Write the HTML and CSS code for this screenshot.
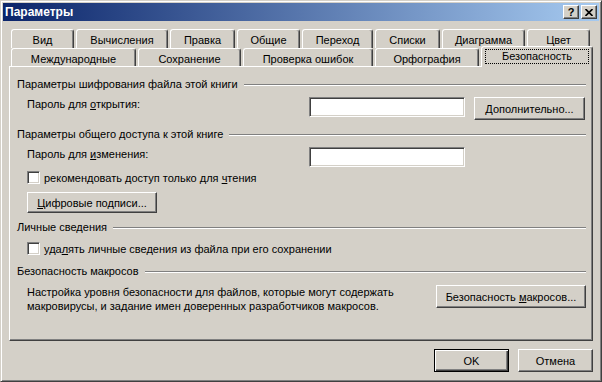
FILE: index.html
```html
<!DOCTYPE html>
<html lang="ru">
<head>
    <meta charset="UTF-8">
    <title>Параметры</title>
    <link rel="stylesheet" href="styles.css">
</head>
<body>
    <div class="window">
        <div class="titlebar">
            <span class="title">Параметры</span>
            <div class="caption-buttons">
                <button class="cap-btn help">?</button>
                <button class="cap-btn">
                    <svg width="8" height="7" viewBox="0 0 8 7">
                        <path d="M0.5 0 L7.5 7 M7.5 0 L0.5 7" stroke="#000" stroke-width="1.6" fill="none"/>
                    </svg>
                </button>
            </div>
        </div>

        <div class="dialog">
            <div class="tabs">
                <div class="tab-row back">
                    <div class="tab" style="width:63px">Вид</div>
                    <div class="tab" style="width:92px">Вычисления</div>
                    <div class="tab" style="width:65px">Правка</div>
                    <div class="tab" style="width:63px">Общие</div>
                    <div class="tab" style="width:71px">Переход</div>
                    <div class="tab" style="width:65px">Списки</div>
                    <div class="tab" style="width:83px">Диаграмма</div>
                    <div class="tab" style="width:63px">Цвет</div>
                </div>
                <div class="tab-row front">
                    <div class="tab" style="width:125px">Международные</div>
                    <div class="tab" style="width:103px">Сохранение</div>
                    <div class="tab" style="width:130px">Проверка ошибок</div>
                    <div class="tab" style="width:104px">Орфография</div>
                    <div class="tab active" style="width:112px"><span class="focus">Безопасность</span></div>
                </div>
            </div>

            <div class="panel">
                <div class="group">
                    <div class="group-title"><span>Параметры шифрования файла этой книги</span></div>
                    <div class="field-row">
                        <span class="field-label">Пароль для <u>о</u>ткрытия:</span>
                        <input class="edit" type="text">
                        <button class="btn more"><u>Д</u>ополнительно...</button>
                    </div>
                </div>

                <div class="group">
                    <div class="group-title"><span>Параметры общего доступа к этой книге</span></div>
                    <div class="field-row">
                        <span class="field-label">Пароль для <u>и</u>зменения:</span>
                        <input class="edit" type="text">
                    </div>
                    <div class="check">
                        <span class="checkbox"></span>
                        <span>рекомендовать доступ только для <u>ч</u>тения</span>
                    </div>
                    <button class="btn signatures"><u>Ц</u>ифровые подписи...</button>
                </div>

                <div class="group">
                    <div class="group-title"><span>Личные сведения</span></div>
                    <div class="check">
                        <span class="checkbox"></span>
                        <span>уда<u>л</u>ять личные сведения из файла при его сохранении</span>
                    </div>
                </div>

                <div class="group macro">
                    <div class="group-title"><span>Безопасность макросов</span></div>
                    <div class="macro-row">
                        <p>Настройка уровня безопасности для файлов, которые могут содержать<br>макровирусы, и задание имен доверенных разработчиков макросов.</p>
                        <button class="btn macro-btn">Безопасность <u>м</u>акросов...</button>
                    </div>
                </div>
            </div>

            <div class="dialog-buttons">
                <button class="btn default">OK</button>
                <button class="btn">Отмена</button>
            </div>
        </div>
    </div>
</body>
</html>
```

FILE: styles.css
```css
body {
    margin: 0;
    font-family: 'Liberation Sans', Arial, sans-serif;
    font-size: 11px;
    color: #000;
    background-color: #d4d0c8;
}

u {
    text-underline-offset: 1px;
}

.window {
    width: 602px;
    height: 382px;
    box-sizing: border-box;
    display: flex;
    flex-direction: column;
    padding: 2px;
    background-color: #d4d0c8;
    border: 1px solid;
    border-color: #d4d0c8 #404040 #404040 #d4d0c8;
    box-shadow: inset 1px 1px #fff, inset -1px -1px #808080;
}

/* title bar */

.titlebar {
    height: 18px;
    flex: 0 0 18px;
    display: flex;
    align-items: center;
    justify-content: space-between;
    padding: 0 2px;
    background: linear-gradient(to right, #0a246a, #a6caf0);
    color: #fff;
}

.title {
    font-weight: bold;
    font-size: 12px;
}

.caption-buttons {
    display: flex;
    gap: 2px;
}

.cap-btn {
    width: 16px;
    height: 14px;
    box-sizing: border-box;
    padding: 0;
    display: flex;
    align-items: center;
    justify-content: center;
    background-color: #d4d0c8;
    border: 1px solid;
    border-color: #fff #404040 #404040 #fff;
    box-shadow: inset -1px -1px #808080;
    font-family: inherit;
    font-size: 11px;
    font-weight: bold;
    color: #000;
}

/* tabs */

.dialog {
    flex: 1;
    display: flex;
    flex-direction: column;
    padding: 8px 6px 0 6px;
}

.tabs {
    margin-left: 2px;
}

.tab-row {
    display: flex;
    gap: 2px;
}

.tab-row.back {
    height: 19px;
}

.tab-row.front {
    height: 18px;
    align-items: flex-end;
}

.tab {
    box-sizing: border-box;
    height: 100%;
    padding-top: 4px;
    line-height: 13px;
    text-align: center;
    white-space: nowrap;
    border: 1px solid;
    border-bottom: 0;
    border-color: #fff #404040 transparent #fff;
    border-radius: 3px 3px 0 0;
    box-shadow: inset -1px 0 #808080;
}

.tab.active {
    height: 21px;
    margin-bottom: -1px;
    padding: 2px 3px 0 3px;
    position: relative;
    z-index: 1;
    background-color: #d4d0c8;
}

.focus {
    display: block;
    line-height: 13px;
    border: 1px dotted #000;
}

/* panel */

.panel {
    flex: 0 0 275px;
    box-sizing: border-box;
    padding: 11px 6px 0 7px;
    border: 1px solid;
    border-color: #fff #404040 #404040 #fff;
    box-shadow: inset -1px -1px #808080;
}

.group + .group {
    margin-top: 8px;
}

.group.macro {
    margin-top: 10px;
}

.group-title {
    display: flex;
    align-items: center;
    gap: 6px;
    line-height: 13px;
}

.group-title::after {
    content: "";
    flex: 1;
    height: 0;
    border-top: 1px solid #808080;
    border-bottom: 1px solid #fff;
}

.field-row {
    display: flex;
    align-items: flex-start;
    margin-top: 6px;
    padding-left: 10px;
}

.field-label {
    width: 282px;
    flex: 0 0 282px;
    padding-top: 1px;
    line-height: 13px;
}

.edit {
    width: 156px;
    height: 20px;
    box-sizing: border-box;
    margin: 0;
    background-color: #fff;
    border: 1px solid;
    border-color: #808080 #fff #fff #808080;
    box-shadow: inset 1px 1px #404040, inset -1px -1px #d4d0c8;
    outline: none;
}

.check {
    display: flex;
    align-items: center;
    gap: 4px;
    height: 13px;
    margin-top: 4px;
    padding-left: 10px;
}

.group-title + .check {
    margin-top: 8px;
}

.checkbox {
    width: 13px;
    height: 13px;
    box-sizing: border-box;
    background-color: #fff;
    border: 1px solid;
    border-color: #808080 #fff #fff #808080;
    box-shadow: inset 1px 1px #404040, inset -1px -1px #d4d0c8;
}

.btn {
    height: 23px;
    width: 75px;
    box-sizing: border-box;
    padding: 0;
    background-color: #d4d0c8;
    border: 1px solid;
    border-color: #fff #404040 #404040 #fff;
    box-shadow: inset -1px -1px #808080;
    font-family: inherit;
    font-size: 11px;
    color: #000;
}

.btn.more {
    width: 111px;
    margin-left: 9px;
}

.btn.signatures {
    display: block;
    width: 130px;
    height: 21px;
    margin: 8px 0 0 10px;
}

.macro-row {
    display: flex;
    justify-content: space-between;
    align-items: flex-start;
    margin-top: 7px;
    padding-left: 10px;
}

.macro-row p {
    margin: 0;
    line-height: 14px;
}

.btn.macro-btn {
    width: 150px;
}

.dialog-buttons {
    display: flex;
    justify-content: flex-end;
    gap: 9px;
    margin-top: 8px;
}

.btn.default {
    border-color: #000;
    box-shadow: inset 1px 1px #fff, inset -1px -1px #404040, inset -2px -2px #808080;
}
```
